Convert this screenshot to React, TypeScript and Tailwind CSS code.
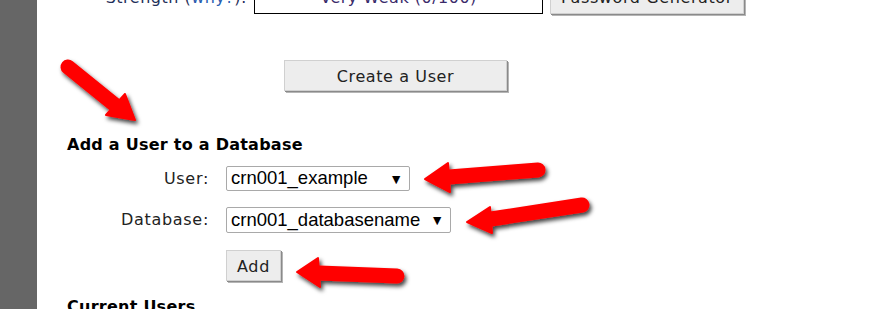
import React from "react";

const verdana = { fontFamily: '"DejaVu Sans", Verdana, sans-serif' };
const arial = { fontFamily: '"Liberation Sans", Arial, sans-serif' };

function Btn({ children, className }: { children: React.ReactNode; className: string }) {
  return (
    <button
      className={`bg-[#ededed] border border-[#d0d0d0] shadow-[1px_1px_0_#8a8a8a,2px_2px_0_#b5b5b5] text-[#222] text-[16px] tracking-[0.6px] leading-none ${className}`}
      style={verdana}
    >
      {children}
    </button>
  );
}

function Arrow({ tail, base, tip, c1, c2 }: { tail: number[]; base: number[]; tip: number[]; c1: number[]; c2: number[] }) {
  return (
    <g filter="url(#sh)">
      <line x1={tail[0]} y1={tail[1]} x2={base[0]} y2={base[1]} stroke="#ff0000" strokeWidth={15} strokeLinecap="round" />
      <polygon points={`${tip[0]},${tip[1]} ${c1[0]},${c1[1]} ${base[0]},${base[1]} ${c2[0]},${c2[1]}`} fill="#ff0000" stroke="#ff0000" strokeWidth={2} strokeLinejoin="round" />
    </g>
  );
}

export default function App() {
  return (
    <div className="relative w-[891px] h-[309px] overflow-hidden bg-white flex">
      <div className="w-[37px] h-full bg-[#666666] shrink-0" />
      <div className="flex flex-col">
        <div className="flex items-center mt-[-12px] h-[26px] shrink-0">
          <div className="w-[210px] text-right text-[16px] tracking-[0.5px] leading-none mt-[-6px] text-[#1f2f5a]" style={verdana}>
            Strength (<span className="text-[#2a5db0]">why?</span>):
          </div>
          <div className="ml-[7px] w-[289px] h-[26px] border border-black flex items-center justify-center text-[16px] tracking-[0.5px] leading-none pb-[6px] text-[#3a2a6a]" style={verdana}>
            Very Weak (0/100)
          </div>
          <Btn className="ml-[7px] w-[194px] h-[25px] pb-[6px]">Password Generator</Btn>
        </div>
        <Btn className="ml-[247px] mt-[46px] w-[223px] h-[31px] pt-[3px] shrink-0">Create a User</Btn>
        <div className="ml-[30px] mt-[45px] text-[16px] tracking-[0.25px] leading-[18px] font-bold text-black shrink-0" style={verdana}>
          Add a User to a Database
        </div>
        <div className="flex items-center mt-[12px] shrink-0">
          <div className="w-[172px] text-right text-[16px] tracking-[0.7px] text-[#222]" style={verdana}>User:</div>
          <div className="ml-[17px] w-[184px] h-[25px] border border-[#a9a9a9] rounded-[2px] flex items-center justify-between pl-[4px] pr-[6px] text-[18.5px] leading-none text-black" style={arial}>
            <span>crn001_example</span>
            <span className="text-[14px]">▼</span>
          </div>
        </div>
        <div className="flex items-center mt-[16px] shrink-0">
          <div className="w-[172px] text-right text-[16px] tracking-[0.7px] text-[#222]" style={verdana}>Database:</div>
          <div className="ml-[17px] w-[225px] h-[26px] border border-[#a9a9a9] rounded-[2px] flex items-center justify-between pl-[4px] pr-[6px] text-[18.5px] leading-none text-black" style={arial}>
            <span>crn001_databasename</span>
            <span className="text-[14px]">▼</span>
          </div>
        </div>
        <Btn className="ml-[189px] mt-[17px] w-[55px] h-[31px] pt-[2px] shrink-0">Add</Btn>
        <div className="ml-[30px] mt-[17px] text-[16px] tracking-[0.25px] leading-[18px] font-bold text-black shrink-0" style={verdana}>
          Current Users
        </div>
      </div>
      <svg className="absolute inset-0 pointer-events-none" width="891" height="309">
        <defs>
          <filter id="sh" x="-20%" y="-40%" width="140%" height="180%">
            <feDropShadow dx="2" dy="3" stdDeviation="2" floodColor="#000" floodOpacity="0.75" />
          </filter>
        </defs>
        <Arrow tail={[68, 67]} base={[115, 105]} tip={[135, 120]} c1={[125, 94]} c2={[106, 115]} />
        <Arrow tail={[538, 170]} base={[449, 177]} tip={[425, 179]} c1={[448, 163]} c2={[450, 192]} />
        <Arrow tail={[582, 205]} base={[491, 219]} tip={[467, 222]} c1={[490, 207]} c2={[492, 233]} />
        <Arrow tail={[397, 276]} base={[319, 273]} tip={[297, 272]} c1={[318, 258]} c2={[320, 287]} />
      </svg>
    </div>
  );
}
